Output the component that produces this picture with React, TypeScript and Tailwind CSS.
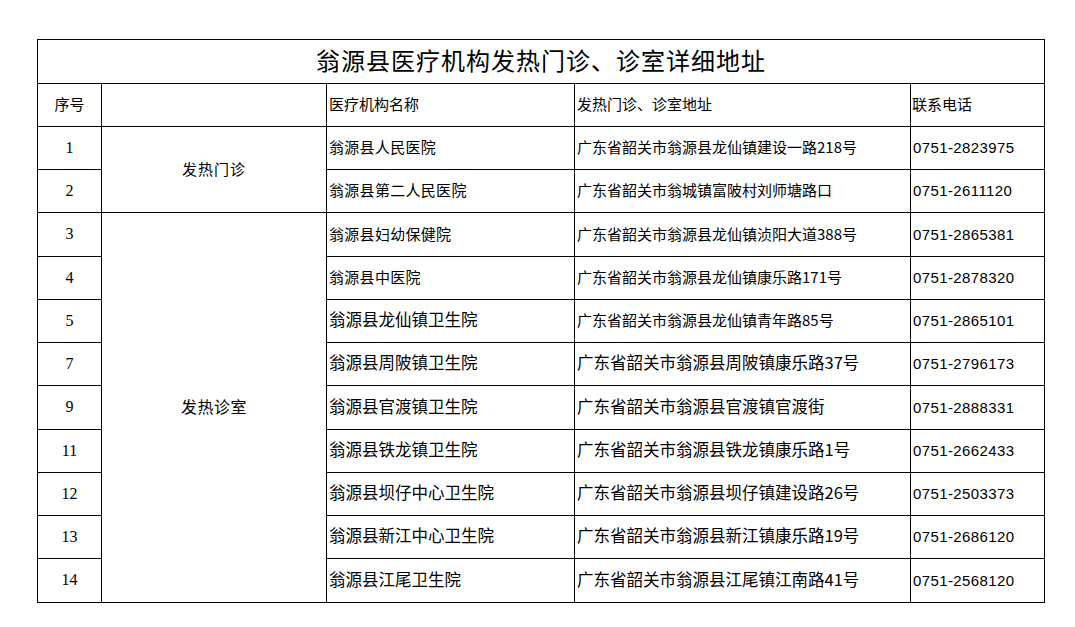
const rows = [
  { no: "1", name: "翁源县人民医院", addr: "广东省韶关市翁源县龙仙镇建设一路218号", tel: "0751-2823975", nameBig: false, addrBig: false, h: "h-[43px]" },
  { no: "2", name: "翁源县第二人民医院", addr: "广东省韶关市翁城镇富陂村刘师塘路口", tel: "0751-2611120", nameBig: false, addrBig: false, h: "h-[43px]" },
  { no: "3", name: "翁源县妇幼保健院", addr: "广东省韶关市翁源县龙仙镇浈阳大道388号", tel: "0751-2865381", nameBig: false, addrBig: false, h: "h-[44px]" },
  { no: "4", name: "翁源县中医院", addr: "广东省韶关市翁源县龙仙镇康乐路171号", tel: "0751-2878320", nameBig: false, addrBig: false, h: "h-[43px]" },
  { no: "5", name: "翁源县龙仙镇卫生院", addr: "广东省韶关市翁源县龙仙镇青年路85号", tel: "0751-2865101", nameBig: true, addrBig: false, h: "h-[43px]" },
  { no: "7", name: "翁源县周陂镇卫生院", addr: "广东省韶关市翁源县周陂镇康乐路37号", tel: "0751-2796173", nameBig: true, addrBig: true, h: "h-[43px]" },
  { no: "9", name: "翁源县官渡镇卫生院", addr: "广东省韶关市翁源县官渡镇官渡街", tel: "0751-2888331", nameBig: true, addrBig: true, h: "h-[44px]" },
  { no: "11", name: "翁源县铁龙镇卫生院", addr: "广东省韶关市翁源县铁龙镇康乐路1号", tel: "0751-2662433", nameBig: true, addrBig: true, h: "h-[43px]" },
  { no: "12", name: "翁源县坝仔中心卫生院", addr: "广东省韶关市翁源县坝仔镇建设路26号", tel: "0751-2503373", nameBig: true, addrBig: true, h: "h-[43px]" },
  { no: "13", name: "翁源县新江中心卫生院", addr: "广东省韶关市翁源县新江镇康乐路19号", tel: "0751-2686120", nameBig: true, addrBig: true, h: "h-[43px]" },
  { no: "14", name: "翁源县江尾卫生院", addr: "广东省韶关市翁源县江尾镇江南路41号", tel: "0751-2568120", nameBig: true, addrBig: true, h: "h-[44px]" },
];

const cjk = "font-['Noto_Sans_CJK_SC',sans-serif]";

export default function App() {
  return (
    <div className="min-h-[627px] w-[1075px] bg-white pl-[37px] pt-[39px] text-black">
      <table className={`w-[1007px] table-fixed border-collapse ${cjk}`}>
        <colgroup>
          <col className="w-[64px]" />
          <col className="w-[225px]" />
          <col className="w-[248px]" />
          <col className="w-[336px]" />
          <col className="w-[134px]" />
        </colgroup>
        <tbody>
          <tr className="h-[44px]">
            <td colSpan={5} className="border border-black p-0 pb-[4px] text-center text-[24px] leading-none tracking-[1px]">
              翁源县医疗机构发热门诊、诊室详细地址
            </td>
          </tr>
          <tr className="h-[43px] text-[15px] leading-none">
            <td className="border border-black p-0 pb-[3px] text-center">序号</td>
            <td className="border border-black p-0"></td>
            <td className="border border-black pt-0 pb-[3px] pl-[2px]">医疗机构名称</td>
            <td className="border border-black pt-0 pb-[3px] pl-[2px]">发热门诊、诊室地址</td>
            <td className="border border-black pt-0 pb-[3px] pl-[1px]">联系电话</td>
          </tr>
          {rows.map((r, i) => (
            <tr key={r.no} className={r.h}>
              <td className="border border-black p-0 pb-[1px] text-center font-['Liberation_Serif',serif] text-[16px] leading-none">
                {r.no}
              </td>
              {i === 0 && (
                <td rowSpan={2} className="border border-black p-0 pb-[3px] text-center text-[15px] leading-none tracking-[1px]">
                  发热门诊
                </td>
              )}
              {i === 2 && (
                <td rowSpan={9} className="border border-black p-0 pb-[3px] text-center text-[16px] leading-none tracking-[0.5px]">
                  发热诊室
                </td>
              )}
              <td
                className={`border border-black pt-0 pb-[3px] pl-[2px] leading-none whitespace-nowrap ${
                  r.nameBig ? "text-[16.5px]" : "text-[15px] tracking-[0.3px]"
                }`}
              >
                {r.name}
              </td>
              <td
                className={`border border-black pt-0 pb-[3px] pl-[2px] leading-none whitespace-nowrap ${
                  r.addrBig ? "text-[16.5px]" : "text-[15px]"
                }`}
              >
                {r.addr}
              </td>
              <td className="border border-black pt-0 pb-[1px] pl-[2px] font-['Liberation_Sans',sans-serif] text-[15px] leading-none tracking-[0.4px]">
                {r.tel}
              </td>
            </tr>
          ))}
        </tbody>
      </table>
    </div>
  );
}
